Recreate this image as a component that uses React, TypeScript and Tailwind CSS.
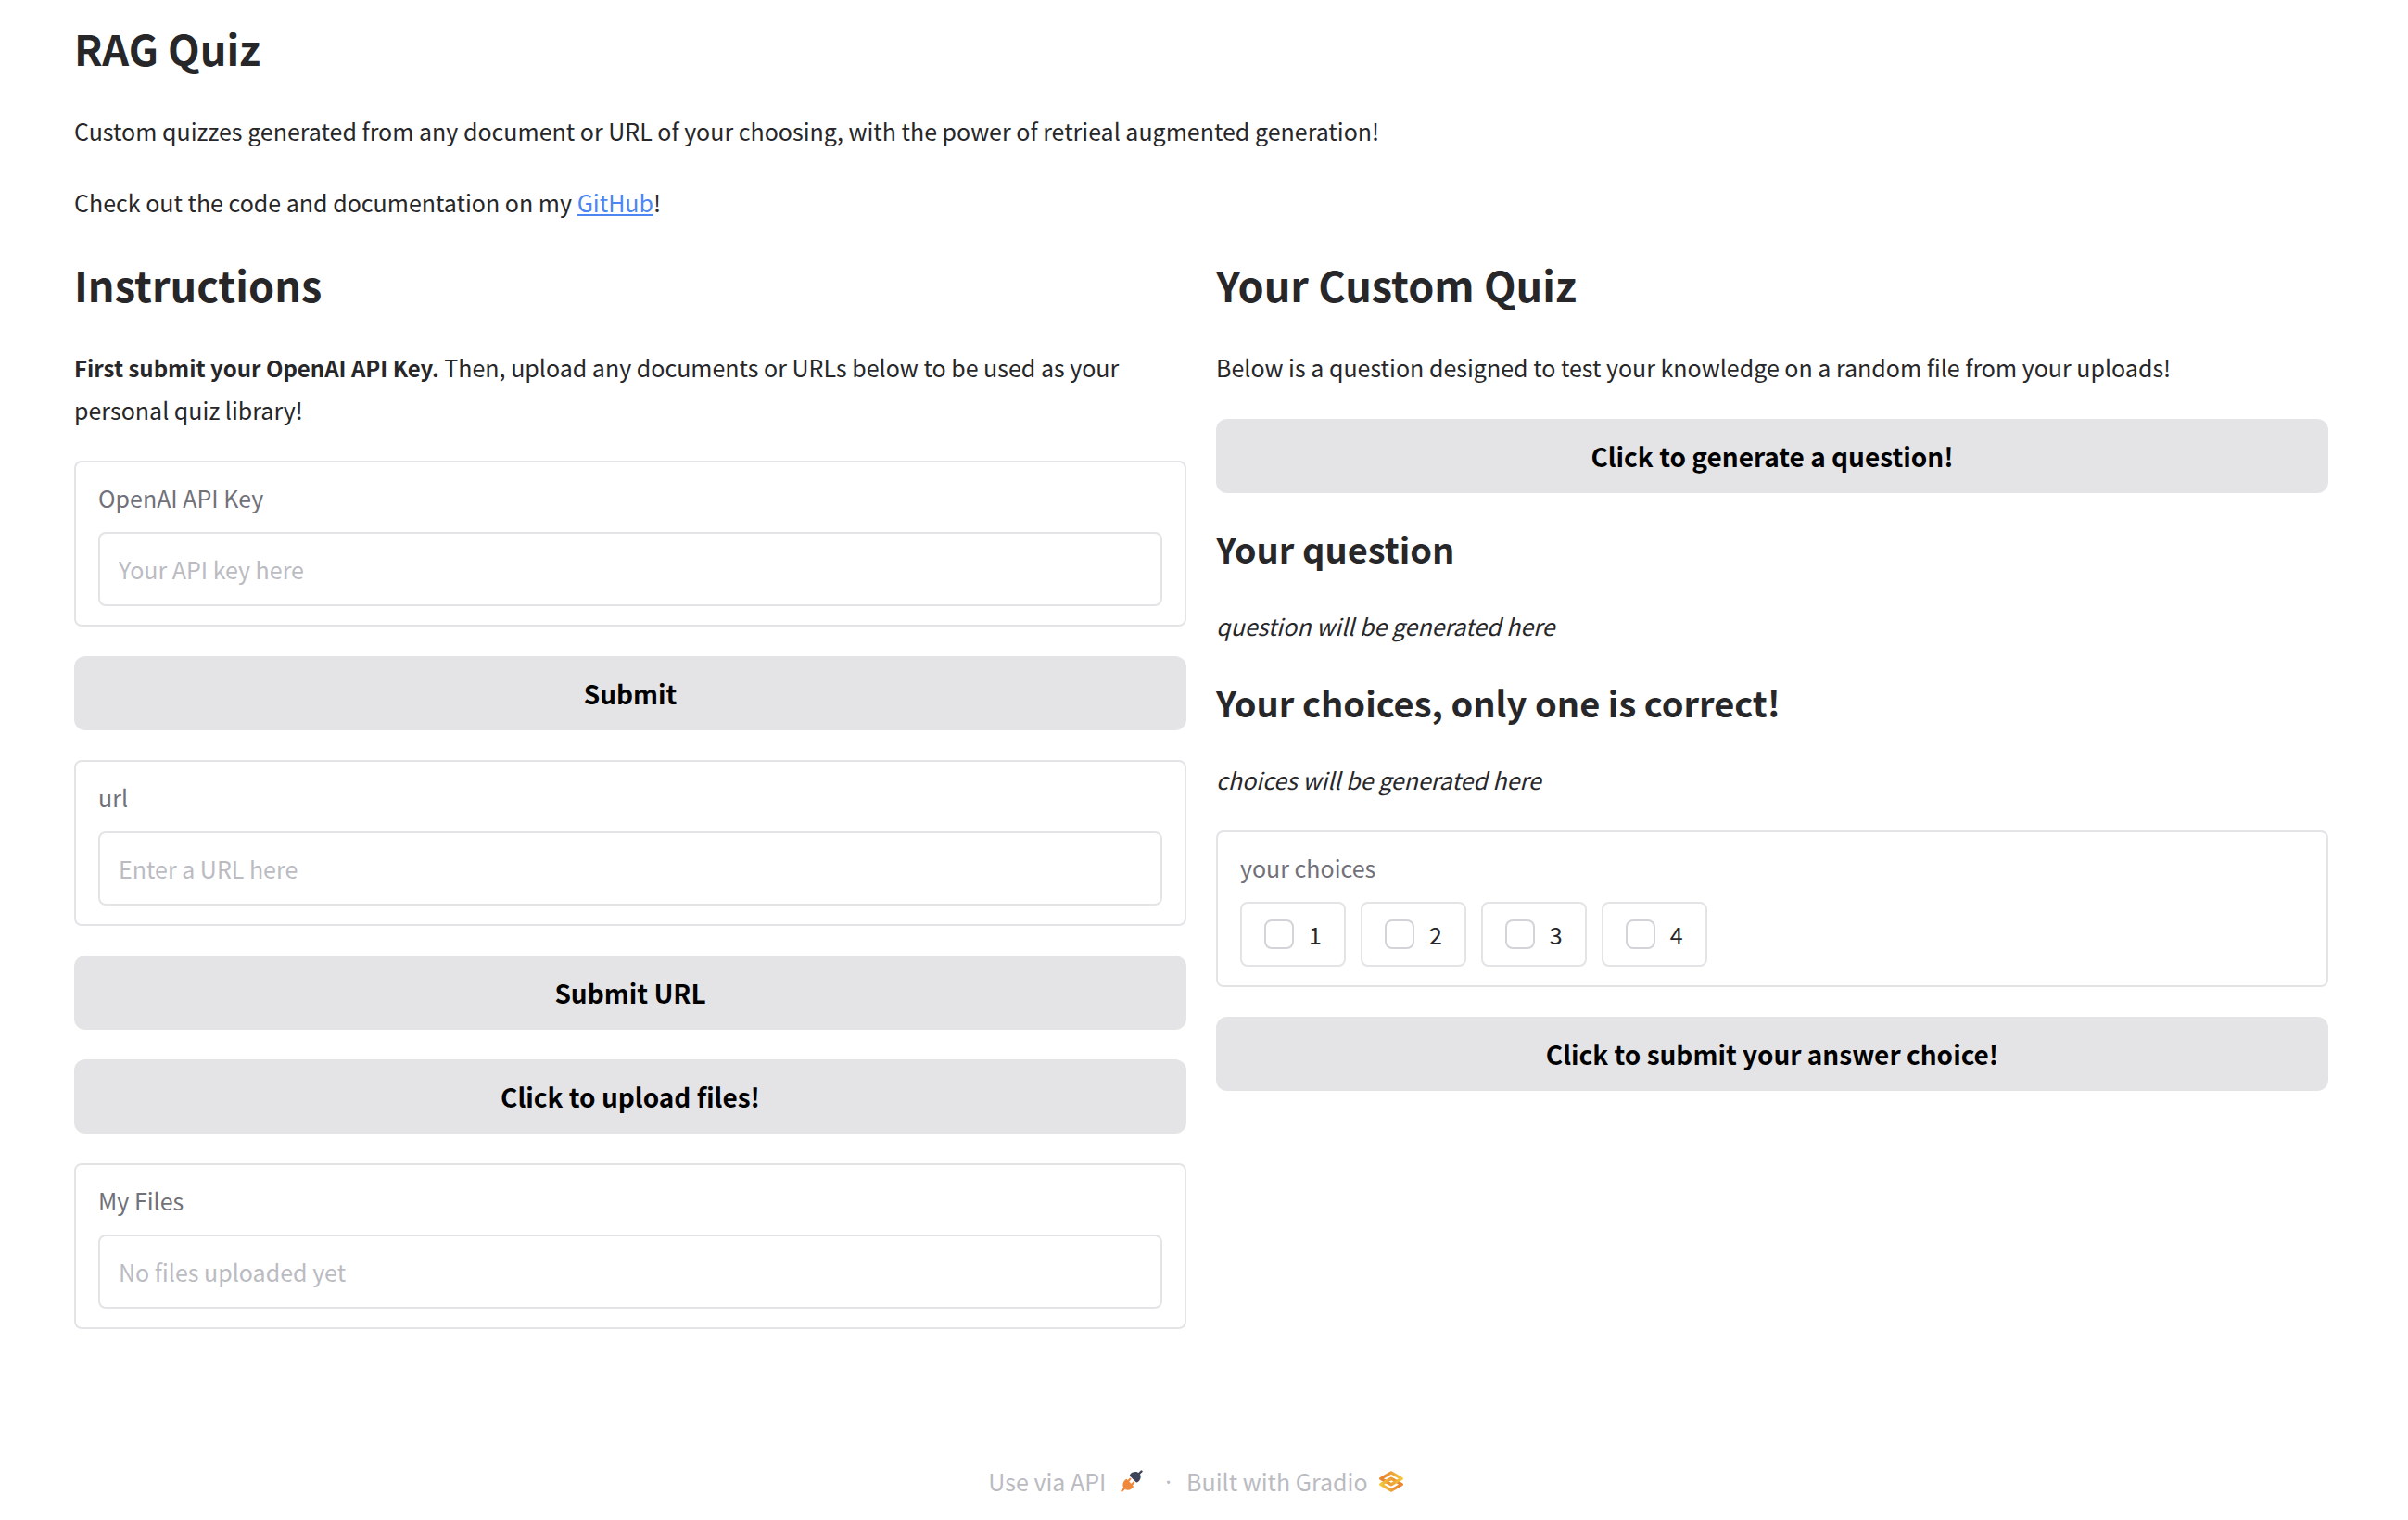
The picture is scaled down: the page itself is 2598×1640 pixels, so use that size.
import type { ReactNode } from "react";

function Heading({ children }: { children: ReactNode }) {
  return <h1 className="text-[45px] leading-[60px] font-semibold">{children}</h1>;
}

function SubHeading({ children }: { children: ReactNode }) {
  return <h2 className="text-[38px] leading-[50px] font-semibold">{children}</h2>;
}

function Button({ children }: { children: ReactNode }) {
  return (
    <button
      type="button"
      className="h-20 w-full rounded-xl bg-[#e4e4e6] text-[28px] leading-10 font-semibold text-black"
    >
      {children}
    </button>
  );
}

function TextField({ id, label, placeholder }: { id: string; label: string; placeholder: string }) {
  return (
    <div className="rounded-lg border-2 border-[#e4e4e7] px-6 pt-[18px] pb-5">
      <label htmlFor={id} className="mb-[17px] block leading-10 text-[#71717a]">
        {label}
      </label>
      <input
        id={id}
        type="text"
        placeholder={placeholder}
        className="block h-20 w-full rounded-lg border-2 border-[#e4e4e7] px-5 placeholder:text-[#bbbbc2]"
      />
    </div>
  );
}

function Choice({ value }: { value: string }) {
  return (
    <label className="flex h-[70px] items-center gap-4 rounded-lg border-2 border-[#e4e4e7] px-6">
      <input type="checkbox" className="size-8 appearance-none rounded-lg border-2 border-[#d4d4d8] bg-white" />
      {value}
    </label>
  );
}

function PlugIcon() {
  return (
    <svg viewBox="0 0 24 24" className="size-6" fill="none" strokeLinecap="round" aria-hidden="true">
      <path d="M19.500 4.500L22.500 1.500" stroke="#3f4558" strokeWidth="2.400" />
      <path
        d="M10 5.200C12 1.800 17.500 .9 20.300 3.700C23 6.500 21.500 11.500 18.200 13.300C17.600 13.600 17 13.500 16.500 13L10.200 6.700C9.800 6.300 9.700 5.700 10 5.200Z"
        fill="#3f4558"
      />
      <path d="M4.500 19.500L1.500 22.500" stroke="#f0883a" strokeWidth="2.400" />
      <path
        d="M5.500 10.300C2.500 12.500 1.200 17.200 3.900 20.100C6.700 22.900 11.500 21.800 13.700 18.600C14.100 18 14 17.400 13.500 16.900L7.200 10.500C6.700 10 6.100 9.900 5.500 10.300Z"
        fill="#f0883a"
      />
      <path d="M8 12.200L10.400 9.800M11.800 16L14.200 13.600" stroke="#f0883a" strokeWidth="2.200" />
    </svg>
  );
}

function GradioIcon() {
  return (
    <svg viewBox="56 82 463 412" className="h-[23px] w-[26px]" fill="none" aria-hidden="true">
      <path d="M287.500 229L86 344.500L287.500 460L489 344.500L287.500 229Z" stroke="url(#lower)" strokeWidth="59" strokeLinejoin="round" />
      <path d="M287.500 116L86 231.500L287.500 347L489 231.500L287.500 116Z" stroke="url(#upper)" strokeWidth="59" strokeLinejoin="round" />
      <path d="M86 344L288 229" stroke="url(#strand)" strokeWidth="59" strokeLinejoin="bevel" />
      <defs>
        <linearGradient id="lower" x1="60" y1="341" x2="429.500" y2="344" gradientUnits="userSpaceOnUse">
          <stop stopColor="#f3cb3d" />
          <stop offset="1" stopColor="#eb8530" />
        </linearGradient>
        <linearGradient id="upper" x1="513.500" y1="231" x2="143.500" y2="231" gradientUnits="userSpaceOnUse">
          <stop stopColor="#f3cb3d" />
          <stop offset="1" stopColor="#eb8530" />
        </linearGradient>
        <linearGradient id="strand" x1="60" y1="344" x2="429" y2="342" gradientUnits="userSpaceOnUse">
          <stop stopColor="#f3cb3d" />
          <stop offset="1" stopColor="#eb8530" />
        </linearGradient>
      </defs>
    </svg>
  );
}

export default function App() {
  return (
    <div className="min-h-screen bg-white pt-[22px] pr-[86px] pl-20 font-['Noto_Sans_CJK_SC',sans-serif] text-[25px] leading-[46px] text-[#27272a]">
      <header>
        <Heading>RAG Quiz</Heading>
        <p className="mt-9">
          Custom quizzes generated from any document or URL of your choosing, with the power of retrieal augmented
          generation!
        </p>
        <p className="mt-[31px]">
          Check out the code and documentation on my{" "}
          <a href="https://github.com" className="text-[#4b86f2] underline">
            GitHub
          </a>
          !
        </p>
      </header>

      <main className="mt-9 grid grid-cols-2 items-start gap-8">
        <section>
          <Heading>Instructions</Heading>
          <p className="mt-9">
            <strong className="text-2xl leading-none font-semibold">First submit your OpenAI API Key.</strong> Then,
            upload any documents or URLs below to be used as your personal quiz library!
          </p>
          <div className="mt-8 flex flex-col gap-8">
            <TextField id="api-key" label="OpenAI API Key" placeholder="Your API key here" />
            <Button>Submit</Button>
            <TextField id="url" label="url" placeholder="Enter a URL here" />
            <Button>Submit URL</Button>
            <Button>Click to upload files!</Button>
            <TextField id="files" label="My Files" placeholder="No files uploaded yet" />
          </div>
        </section>

        <section>
          <Heading>Your Custom Quiz</Heading>
          <p className="mt-9 mb-[33px]">
            Below is a question designed to test your knowledge on a random file from your uploads!
          </p>
          <Button>Click to generate a question!</Button>
          <div className="mt-[35px]">
            <SubHeading>Your question</SubHeading>
            <p className="mt-[35px] italic">question will be generated here</p>
          </div>
          <div className="mt-[35px]">
            <SubHeading>Your choices, only one is correct!</SubHeading>
            <p className="mt-[35px] italic">choices will be generated here</p>
          </div>
          <fieldset className="my-8 rounded-lg border-2 border-[#e4e4e7] px-6 pt-[18px] pb-5">
            <legend className="float-left mb-[17px] w-full leading-10 text-[#71717a]">your choices</legend>
            <div className="clear-both flex gap-4">
              <Choice value="1" />
              <Choice value="2" />
              <Choice value="3" />
              <Choice value="4" />
            </div>
          </fieldset>
          <Button>Click to submit your answer choice!</Button>
        </section>
      </main>

      <footer className="mt-[141px] flex items-center justify-center pr-3 text-[#bbbbc2]">
        <a href="#api" className="flex items-center gap-4">
          Use via API
          <PlugIcon />
        </a>
        <span className="mr-4 ml-6 font-['Noto_Sans']">·</span>
        <a href="https://gradio.app" className="flex items-center gap-3">
          Built with Gradio
          <GradioIcon />
        </a>
      </footer>
    </div>
  );
}
